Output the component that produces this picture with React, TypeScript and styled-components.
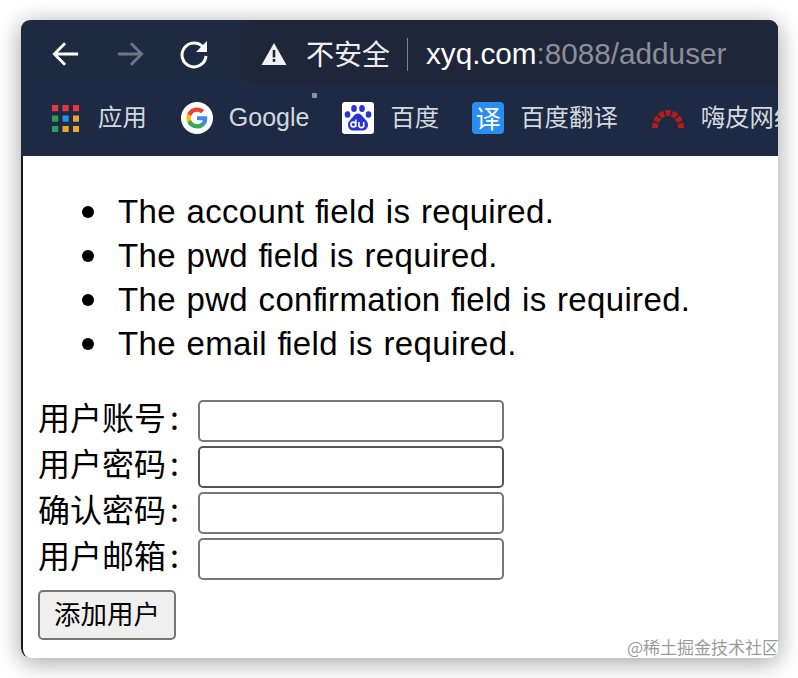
import React from "react";
import styled, { createGlobalStyle } from "styled-components";

const Global = createGlobalStyle`
  html, body { margin: 0; padding: 0; background: #fff; }
  * { box-sizing: border-box; }
`;
const Page = styled.div`
  width: 798px; height: 678px; padding: 20px 20px 20px 21px; overflow: hidden;
  font-family: "Liberation Sans", "Noto Sans CJK SC", sans-serif;
`;
const Win = styled.div`
  position: relative; width: 757px; height: 638px; border-radius: 9px; overflow: hidden;
  display: flex; flex-direction: column; background: #fff;
`;
const Shadow = styled.div`
  width: 757px; height: 638px; border-radius: 9px;
  box-shadow: 0 4px 24px rgba(0,0,0,.38);
`;
const Toolbar = styled.div`
  height: 64px; background: #1e2a42; display: flex; align-items: center; padding: 4px 0 0 30px; flex: none;
`;
const NavBtn = styled.div<{ $gap: number; $dim?: boolean }>`
  width: 30px; height: 30px; margin-right: ${p => p.$gap}px; color: ${p => p.$dim ? "#6f7786" : "#fff"};
  display: flex; align-items: center; justify-content: center;
`;
const Omni = styled.div`
  flex: 1; height: 64px; margin-top: -4px; background: linear-gradient(90deg, #1e2a42, #20263a 22px);
  border-radius: 30px 0 0 30px;
  display: flex; align-items: center; padding-left: 33px; padding-top: 4px;
`;
const Warn = styled.span`font-size: 28px; color: #eceef2; margin-left: 19px; padding-bottom: 3px; font-family: "Noto Sans CJK SC", sans-serif;`;
const Sep = styled.div`width: 1px; height: 33px; background: #7d8190; margin: 0 18px 0 17px;`;
const Host = styled.span`font-size: 29.7px; color: #fff;`;
const Rest = styled.span`color: #8b8e99;`;
const Bookmarks = styled.div`
  height: 72px; background: #1e2a44; display: flex; align-items: center; padding: 0 0 4px 31px; flex: none; white-space: nowrap; overflow: hidden;
`;
const Mark = styled.div<{ $gap: number }>`
  display: flex; align-items: center; margin-right: ${p => p.$gap}px; flex: none;
`;
const MarkText = styled.span<{ $ml: number }>`
  margin-left: ${p => p.$ml}px; font-size: 24.4px; color: #d3d8df; font-family: "Noto Sans CJK SC", sans-serif; line-height: 32px; padding-bottom: 4px;
`;
const GoogleText = styled(MarkText)`font-family: "Liberation Sans", sans-serif; font-size: 25px; padding-bottom: 2px;`;
const YiIcon = styled.div`
  width: 32px; height: 32px; border-radius: 4px; background: #2a8df0; color: #fff; font-size: 25px; line-height: 30px;
  text-align: center; font-family: "Noto Sans CJK SC", sans-serif;
`;
const Speck = styled.div`
  position: absolute; left: 291px; top: 73px; width: 5px; height: 5px; background: #8b93a8; border-radius: 1px;
`;
const Content = styled.div`
  flex: 1; border-left: 2px solid #1a1a1a; padding: 34px 0 0 15px; position: relative; border-bottom-left-radius: 9px;
`;
const ErrorList = styled.ul`
  margin: 0 0 34px; padding: 0 0 0 80px; list-style: none; line-height: 44px; color: #000;
`;
const ErrorItem = styled.li`
  position: relative; font-size: 33px; letter-spacing: .35px; word-spacing: 1px; white-space: nowrap;
  &::before { content: ""; position: absolute; left: -36px; top: 16px; width: 12px; height: 12px; border-radius: 50%; background: #000; }
`;
const TightF = styled.span`letter-spacing: -1.6px;`;
const Row = styled.div`
  display: flex; align-items: center; height: 42px; margin-bottom: 4px;
`;
const Label = styled.label`
  width: 160px; font-size: 32px; line-height: 42px; color: #000; font-family: "Noto Sans CJK SC", sans-serif; white-space: nowrap; padding-bottom: 10px; height: 42px; display: flex; align-items: center;
`;
const Colon = styled.span`margin-left: 4px;`;
const Field = styled.div<{ $focus?: boolean }>`
  width: 306px; height: 42px; border: 2px solid ${p => p.$focus ? "#555" : "#777"}; border-radius: 5px; background: #fff;
`;
const Submit = styled.button`
  display: block; margin-top: 10px; width: 138px; height: 50px; border: 2px solid #767676; border-radius: 5px; background: #efefef;
  font-size: 26.5px; color: #000; font-family: "Noto Sans CJK SC", sans-serif; padding: 0 0 5px;
`;
const Watermark = styled.div`
  position: absolute; right: -1px; bottom: 0; font-size: 17px; line-height: 22px; color: rgba(120,120,120,.75); font-family: "Noto Sans CJK SC", sans-serif;
  background: rgba(255,255,255,.4);
`;
const FlipSvg = styled.svg<{ $flip?: boolean }>`
  transform: ${p => p.$flip ? "scaleX(-1)" : "none"};
`;

const Arrow = ({ flip }: { flip?: boolean }) => (
  <FlipSvg $flip={flip} width="28" height="28" viewBox="0 0 30 30" fill="none" stroke="currentColor" strokeWidth="3">
    <path d="M28 15H3M14 3.500L2.500 15 14 26.500" />
  </FlipSvg>
);
const Reload = () => (
  <svg width="30" height="30" viewBox="0 0 30 30" fill="none">
    <path d="M24.500 8.500A12 12 0 1 0 27 17" stroke="#fff" strokeWidth="3" />
    <path d="M28 2v11H17z" fill="#fff" />
  </svg>
);
const Triangle = () => (
  <svg width="26" height="24" viewBox="0 0 26 24">
    <path d="M13 1L25.500 23H.5z" fill="#f0f1f3" />
    <rect x="11.700" y="8" width="2.600" height="7.500" fill="#20263a" />
    <rect x="11.700" y="17" width="2.600" height="2.800" fill="#20263a" />
  </svg>
);
const Apps = () => {
  const c = ["#e8383d", "#e8383d", "#e8383d", "#2e9e5b", "#2b8fe8", "#f0a52a", "#2e9e5b", "#f0a52a", "#f0a52a"];
  return (
    <svg width="27" height="27" viewBox="0 0 27 27">
      {c.map((f, i) => <rect key={i} x={(i % 3) * 10.5} y={Math.floor(i / 3) * 10.5} width="6.2" height="6.2" fill={f} />)}
    </svg>
  );
};
const GoogleIcon = () => (
  <svg width="32" height="32" viewBox="0 0 32 32">
    <circle cx="16" cy="16" r="16" fill="#fff" />
    <g transform="translate(5.500 5.500) scale(.4375)">
      <path fill="#4285F4" d="M47.500 24.600c0-1.600-.1-3.100-.4-4.600H24v9.100h13.200c-.6 3-2.300 5.600-4.900 7.300v6.100h7.900c4.600-4.300 7.300-10.600 7.300-17.900z" />
      <path fill="#34A853" d="M24 48c6.600 0 12.100-2.200 16.200-5.900l-7.900-6.100c-2.200 1.500-5 2.300-8.300 2.300-6.400 0-11.800-4.300-13.700-10.100H2.100v6.300C6.100 42.600 14.400 48 24 48z" />
      <path fill="#FBBC05" d="M10.300 28.200c-.5-1.500-.8-3-.8-4.700s.3-3.200.8-4.700v-6.300H2.100C.8 15.900 0 19.800 0 24s.8 7.600 2.100 10.500z" />
      <path fill="#EA4335" d="M24 9.500c3.600 0 6.800 1.200 9.300 3.600l7-7C36.100 2.200 30.600 0 24 0 14.400 0 6.100 5.400 2.100 13.500l8.200 6.300C12.200 13.800 17.600 9.500 24 9.500z" />
    </g>
  </svg>
);
const BaiduIcon = () => (
  <svg width="32" height="32" viewBox="0 0 32 32">
    <rect width="32" height="32" rx="3" fill="#fff" />
    <g fill="#2932d6">
      <ellipse cx="5.500" cy="12.500" rx="2.800" ry="3.200" />
      <ellipse cx="12" cy="6.500" rx="2.800" ry="3.500" />
      <ellipse cx="20" cy="6.500" rx="2.800" ry="3.500" />
      <ellipse cx="26.500" cy="12.500" rx="2.800" ry="3.200" />
      <path d="M16 11.500c3 0 4.500 3 6.500 5 2.500 2.300 3.500 4 3.500 6.500 0 3.500-2.800 5.500-5.500 5.500h-9c-3 0-5.500-2-5.500-5.500 0-2.500 1-4.200 3.500-6.500 2-2 3.500-5 6.500-5z" />
    </g>
    <path d="M9 22.500a2.400 2.400 0 1 0 4.800 0a2.400 2.400 0 1 0-4.800 0M13.800 17.500v7.400M17 20v3.500c0 2.800 4.700 2.800 4.700 0V20M21.700 20v5" fill="none" stroke="#fff" strokeWidth="1.600" />
  </svg>
);
const ArcIcon = () => (
  <svg width="32" height="24" viewBox="0 0 32 24" fill="none" stroke="#b71c1c" strokeWidth="6">
    <path d="M3 22a13 15 0 0 1 26 0" strokeDasharray="5 1.500" />
  </svg>
);

export default function App() {
  return (
    <Page>
      <Global />
      <Shadow>
        <Win>
          <Toolbar>
            <NavBtn $gap={34}><Arrow /></NavBtn>
            <NavBtn $gap={34} $dim><Arrow flip /></NavBtn>
            <NavBtn $gap={19}><Reload /></NavBtn>
            <Omni>
              <Triangle />
              <Warn>不安全</Warn>
              <Sep />
              <Host>xyq.com<Rest>:8088/adduser</Rest></Host>
            </Omni>
          </Toolbar>
          <Bookmarks>
            <Mark $gap={34}><Apps /><MarkText $ml={19}>应用</MarkText></Mark>
            <Mark $gap={33}><GoogleIcon /><GoogleText $ml={16}>Google</GoogleText></Mark>
            <Mark $gap={33}><BaiduIcon /><MarkText $ml={16}>百度</MarkText></Mark>
            <Mark $gap={34}><YiIcon>译</YiIcon><MarkText $ml={16}>百度翻译</MarkText></Mark>
            <Mark $gap={0}><ArcIcon /><MarkText $ml={17}>嗨皮网络</MarkText></Mark>
          </Bookmarks>
          <Speck />
          <Content>
            <ErrorList>
              <ErrorItem>The account <TightF>f</TightF>ield is required.</ErrorItem>
              <ErrorItem>The pwd <TightF>f</TightF>ield is required.</ErrorItem>
              <ErrorItem>The pwd con<TightF>f</TightF>irmation <TightF>f</TightF>ield is required.</ErrorItem>
              <ErrorItem>The email <TightF>f</TightF>ield is required.</ErrorItem>
            </ErrorList>
            <Row><Label>用户账号<Colon>:</Colon></Label><Field /></Row>
            <Row><Label>用户密码<Colon>:</Colon></Label><Field $focus /></Row>
            <Row><Label>确认密码<Colon>:</Colon></Label><Field /></Row>
            <Row><Label>用户邮箱<Colon>:</Colon></Label><Field /></Row>
            <Submit>添加用户</Submit>
            <Watermark>@稀土掘金技术社区</Watermark>
          </Content>
        </Win>
      </Shadow>
    </Page>
  );
}
